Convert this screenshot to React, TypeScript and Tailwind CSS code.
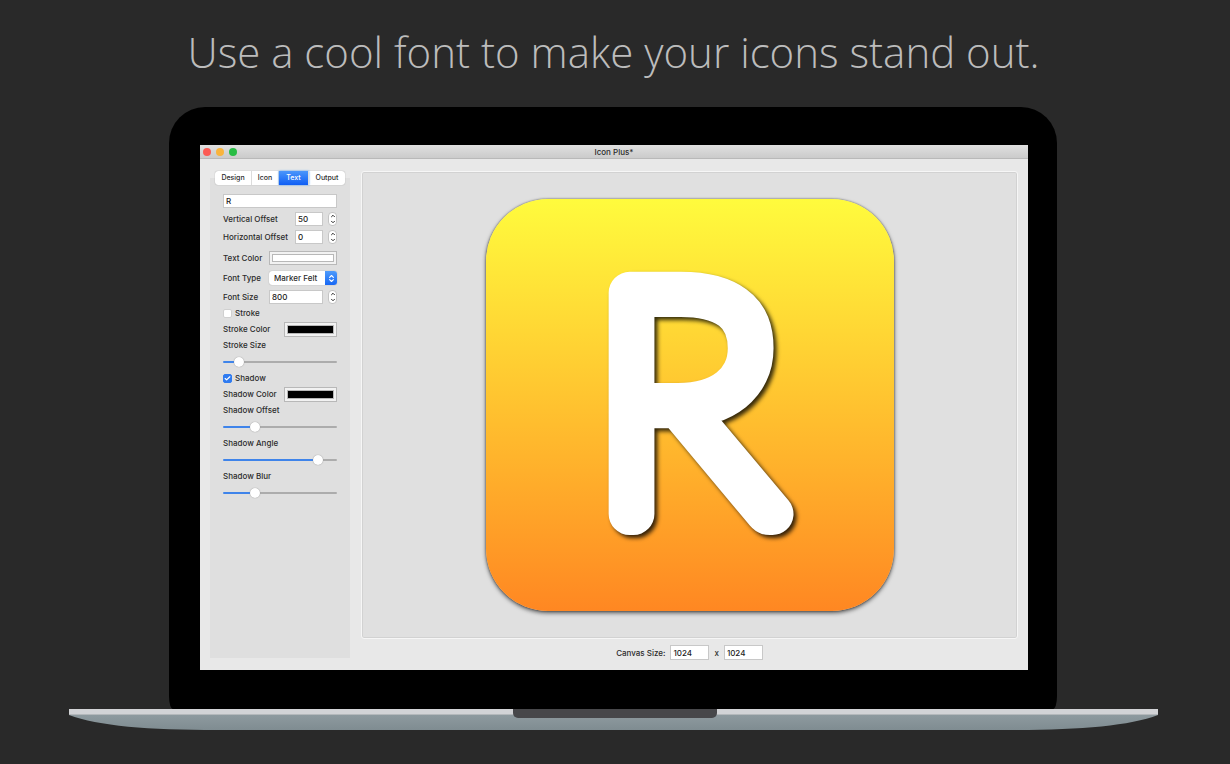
import { useState } from "react";
import type { CSSProperties, ReactNode } from "react";
import { clsx } from "clsx";
import { Check, ChevronDown, ChevronUp, ChevronsUpDown } from "lucide-react";

const tabs = [
  { name: "Design", width: "w-[37px]" },
  { name: "Icon", width: "w-[27px]" },
  { name: "Text", width: "w-[30px]" },
  { name: "Output", width: "w-[36px]" },
];

const fieldClass =
  "h-[14px] min-w-0 border border-[#c8c8c8] bg-white px-[2px] text-[8px] leading-[12px] text-[#222] outline-none";

interface RowProps {
  label: string;
  id: string;
  className?: string;
  children: ReactNode;
}

function Row({ label, id, className, children }: RowProps) {
  return (
    <div className={clsx("flex items-center justify-between", className)}>
      <label htmlFor={id} className="whitespace-nowrap">
        {label}
      </label>
      {children}
    </div>
  );
}

function Stepper({ label }: { label: string }) {
  return (
    <div className="flex h-[14px] w-[9px] flex-col overflow-hidden rounded-[4px] border border-[#c4c4c4] bg-white">
      <button aria-label={`Increase ${label}`} className="flex flex-1 items-center justify-center">
        <ChevronUp size={6} strokeWidth={4} />
      </button>
      <button aria-label={`Decrease ${label}`} className="flex flex-1 items-center justify-center">
        <ChevronDown size={6} strokeWidth={4} />
      </button>
    </div>
  );
}

interface NumberRowProps {
  label: string;
  id: string;
  value: string;
  rowClass: string;
  inputClass: string;
}

function NumberRow({ label, id, value, rowClass, inputClass }: NumberRowProps) {
  return (
    <Row label={label} id={id} className={rowClass}>
      <div className="flex items-center gap-[5px]">
        <input id={id} defaultValue={value} className={clsx(fieldClass, inputClass)} />
        <Stepper label={label} />
      </div>
    </Row>
  );
}

interface ColorWellProps {
  id: string;
  color: string;
  className: string;
}

function ColorWell({ id, color, className }: ColorWellProps) {
  return (
    <input
      id={id}
      type="color"
      defaultValue={color}
      className={clsx(
        "appearance-none border border-[#b8b8b8] bg-[#f2f2f2] p-[2px] [&::-webkit-color-swatch-wrapper]:p-0 [&::-webkit-color-swatch]:rounded-none [&::-webkit-color-swatch]:border [&::-webkit-color-swatch]:border-[#b8b8b8]",
        className,
      )}
    />
  );
}

function SliderRow({ label, id, initial }: { label: string; id: string; initial: number }) {
  const [value, setValue] = useState(initial);

  return (
    <div>
      <label htmlFor={id} className="block h-4 leading-4">
        {label}
      </label>
      <div className="flex h-[17px] items-center">
        <input
          id={id}
          type="range"
          min={0}
          max={100}
          value={value}
          onChange={(e) => setValue(Number(e.target.value))}
          style={{ "--fill": `${value}%` } as CSSProperties}
          className="h-[10px] w-full appearance-none bg-transparent [&::-webkit-slider-runnable-track]:h-[2px] [&::-webkit-slider-runnable-track]:rounded-full [&::-webkit-slider-runnable-track]:bg-[linear-gradient(to_right,#3f84ea_var(--fill),#acacac_var(--fill))] [&::-webkit-slider-thumb]:-mt-[4px] [&::-webkit-slider-thumb]:size-[10px] [&::-webkit-slider-thumb]:appearance-none [&::-webkit-slider-thumb]:rounded-full [&::-webkit-slider-thumb]:bg-white [&::-webkit-slider-thumb]:shadow-[0_0_1px_#777]"
        />
      </div>
    </div>
  );
}

function CheckRow({ label, initial = false }: { label: string; initial?: boolean }) {
  const [checked, setChecked] = useState(initial);

  return (
    <label className="flex h-4 items-center gap-[3px]">
      <span className="grid size-[9px] place-items-center">
        <input
          type="checkbox"
          checked={checked}
          onChange={(e) => setChecked(e.target.checked)}
          className="col-start-1 row-start-1 size-[9px] appearance-none rounded-[2px] border border-[#d0d0d0] bg-white checked:border-[#2f7bf0] checked:bg-[#2f7bf0]"
        />
        {checked && (
          <Check
            size={7}
            strokeWidth={4}
            className="pointer-events-none z-10 col-start-1 row-start-1 text-white"
          />
        )}
      </span>
      {label}
    </label>
  );
}

function Sidebar() {
  const [activeTab, setActiveTab] = useState("Text");

  return (
    <aside className="flex w-[140px] shrink-0 flex-col pb-3">
      <div className="z-10 flex h-[14px] justify-center">
        <div className="flex rounded-[3px] bg-white shadow-[0_0_1px_#888]">
          {tabs.map((tab) => (
            <button
              key={tab.name}
              onClick={() => setActiveTab(tab.name)}
              className={clsx(
                "border-r border-[#dcdcdc] text-center text-[7px] leading-[14px] font-medium last:border-r-0",
                tab.width,
                activeTab === tab.name &&
                  "border-[#2070f5] bg-linear-to-b from-[#4a96fb] to-[#0f5df4] text-white shadow-[0_0_2px_#58a6ff]",
              )}
            >
              {tab.name}
            </button>
          ))}
        </div>
      </div>

      <div className="-mt-[7px] flex flex-1 flex-col bg-[#dfdfdf] pt-[16px] pr-[13px] pl-[13px]">
        <input aria-label="Icon text" defaultValue="R" className={clsx(fieldClass, "mb-[2px] w-full")} />
        <NumberRow label="Vertical Offset" id="v-offset" value="50" rowClass="h-[18px]" inputClass="w-[28px]" />
        <NumberRow label="Horizontal Offset" id="h-offset" value="0" rowClass="mb-[2px] h-[18px]" inputClass="w-[28px]" />
        <Row label="Text Color" id="text-color" className="h-5">
          <ColorWell id="text-color" color="#ffffff" className="h-[14px] w-[68px]" />
        </Row>
        <Row label="Font Type" id="font-type" className="h-5">
          <div className="grid h-[14px] w-[68px] grid-cols-[1fr_12px] overflow-hidden rounded-[3px] bg-white shadow-[0_0_1px_#888]">
            <select
              id="font-type"
              className="col-span-2 col-start-1 row-start-1 appearance-none pl-[5px] text-[8px] leading-[14px] outline-none"
            >
              <option>Marker Felt</option>
            </select>
            <span className="pointer-events-none z-10 col-start-2 row-start-1 flex items-center justify-center bg-linear-to-b from-[#4e9bfb] to-[#1767f4] text-white">
              <ChevronsUpDown size={9} strokeWidth={3} />
            </span>
          </div>
        </Row>
        <NumberRow label="Font Size" id="font-size" value="800" rowClass="h-[17px]" inputClass="w-[54px]" />
        <CheckRow label="Stroke" />
        <Row label="Stroke Color" id="stroke-color" className="h-4">
          <ColorWell id="stroke-color" color="#000000" className="h-[15px] w-[53px]" />
        </Row>
        <SliderRow label="Stroke Size" id="stroke-size" initial={11} />
        <CheckRow label="Shadow" initial />
        <Row label="Shadow Color" id="shadow-color" className="h-4">
          <ColorWell id="shadow-color" color="#000000" className="h-[15px] w-[53px]" />
        </Row>
        <SliderRow label="Shadow Offset" id="shadow-offset" initial={26} />
        <SliderRow label="Shadow Angle" id="shadow-angle" initial={87} />
        <SliderRow label="Shadow Blur" id="shadow-blur" initial={26} />
      </div>
    </aside>
  );
}

function Canvas() {
  return (
    <main className="flex min-w-0 flex-1 flex-col">
      <div className="flex justify-center rounded-[3px] border border-[#f6f6f6] bg-[#e0e0e0] py-[27px] shadow-[inset_0_0_0_1px_#d2d2d2]">
        <div className="h-[412px] w-[408px] rounded-[62px] bg-linear-to-b from-[#fffb3d] to-[#ff8722] shadow-[0_2px_4px_#0009,0_0_2px_#0008]">
          <svg viewBox="0 0 408 412" className="size-full overflow-visible drop-shadow-[3px_3px_2px_#000c]">
            <text
              x="107"
              y="315"
              fill="white"
              stroke="white"
              strokeWidth="42"
              strokeLinejoin="round"
              className="font-['Marker_Felt',Lato,sans-serif] text-[316px] leading-none font-thin"
            >
              R
            </text>
          </svg>
        </div>
      </div>

      <div className="flex items-center justify-center pt-[6px] pb-[10px]">
        <label htmlFor="canvas-width">Canvas Size:</label>
        <input id="canvas-width" defaultValue="1024" className={clsx(fieldClass, "ml-[5px] h-[15px] w-[39px]")} />
        <span className="px-[5px]">x</span>
        <input aria-label="Canvas height" defaultValue="1024" className={clsx(fieldClass, "h-[15px] w-[39px]")} />
      </div>
    </main>
  );
}

function AppWindow() {
  return (
    <div className="bg-[#e8e8e8] font-[Inter,sans-serif] text-[8px] leading-[14px] font-medium text-[#2b2b2b]">
      {/* Title bar */}
      <header className="grid h-[14px] grid-cols-[1fr_auto_1fr] items-center border-b border-[#b9b9b9] bg-linear-to-b from-[#e0e0e0] to-[#cbcbcb] px-[3px]">
        <div className="flex gap-[5px]">
          <button aria-label="Close" className="size-2 rounded-full bg-[#fc5b54]" />
          <button aria-label="Minimize" className="size-2 rounded-full bg-[#f9b43d]" />
          <button aria-label="Zoom" className="size-2 rounded-full bg-[#28bd44]" />
        </div>
        <span>Icon Plus*</span>
      </header>

      <div className="flex gap-[11px] px-[10px] pt-3">
        <Sidebar />
        <Canvas />
      </div>
    </div>
  );
}

function LaptopBase() {
  return (
    <div className="grid">
      <div className="col-start-1 row-start-1">
        <div className="h-[6px] border-b border-[#b4b8bb] bg-[#d2d3d6]" />
        <svg viewBox="0 0 1089 15" preserveAspectRatio="none" className="block h-[15px] w-full">
          <defs>
            <linearGradient id="base" x1="0" y1="0" x2="0" y2="1">
              <stop offset="0" stopColor="#8e9a9f" />
              <stop offset="1" stopColor="#7f8c91" />
            </linearGradient>
          </defs>
          <path d="M0 0H1089C1060 11 1010 15 940 15H149C79 15 29 11 0 0Z" fill="url(#base)" />
        </svg>
      </div>
      <div className="col-start-1 row-start-1 ml-[3px] h-[9px] w-[204px] justify-self-center rounded-b-[5px] bg-[#47474a]" />
    </div>
  );
}

export default function App() {
  return (
    <div className="min-h-screen bg-[#292929] pr-[72px] pb-8 pl-[69px]">
      <h1 className="pt-[22px] pb-[25px] text-center font-['Open_Sans',sans-serif] text-[42px] leading-[60px] font-light text-[#bcbcbc]">
        Use a cool font to make your icons stand out.
      </h1>

      {/* Laptop lid */}
      <div className="mr-[101px] ml-[100px] rounded-[36px_36px_4px_4px/36px_36px_13px_13px] bg-black pt-[38px] pr-[29px] pb-[39px] pl-[31px]">
        <AppWindow />
      </div>
      <LaptopBase />
    </div>
  );
}
